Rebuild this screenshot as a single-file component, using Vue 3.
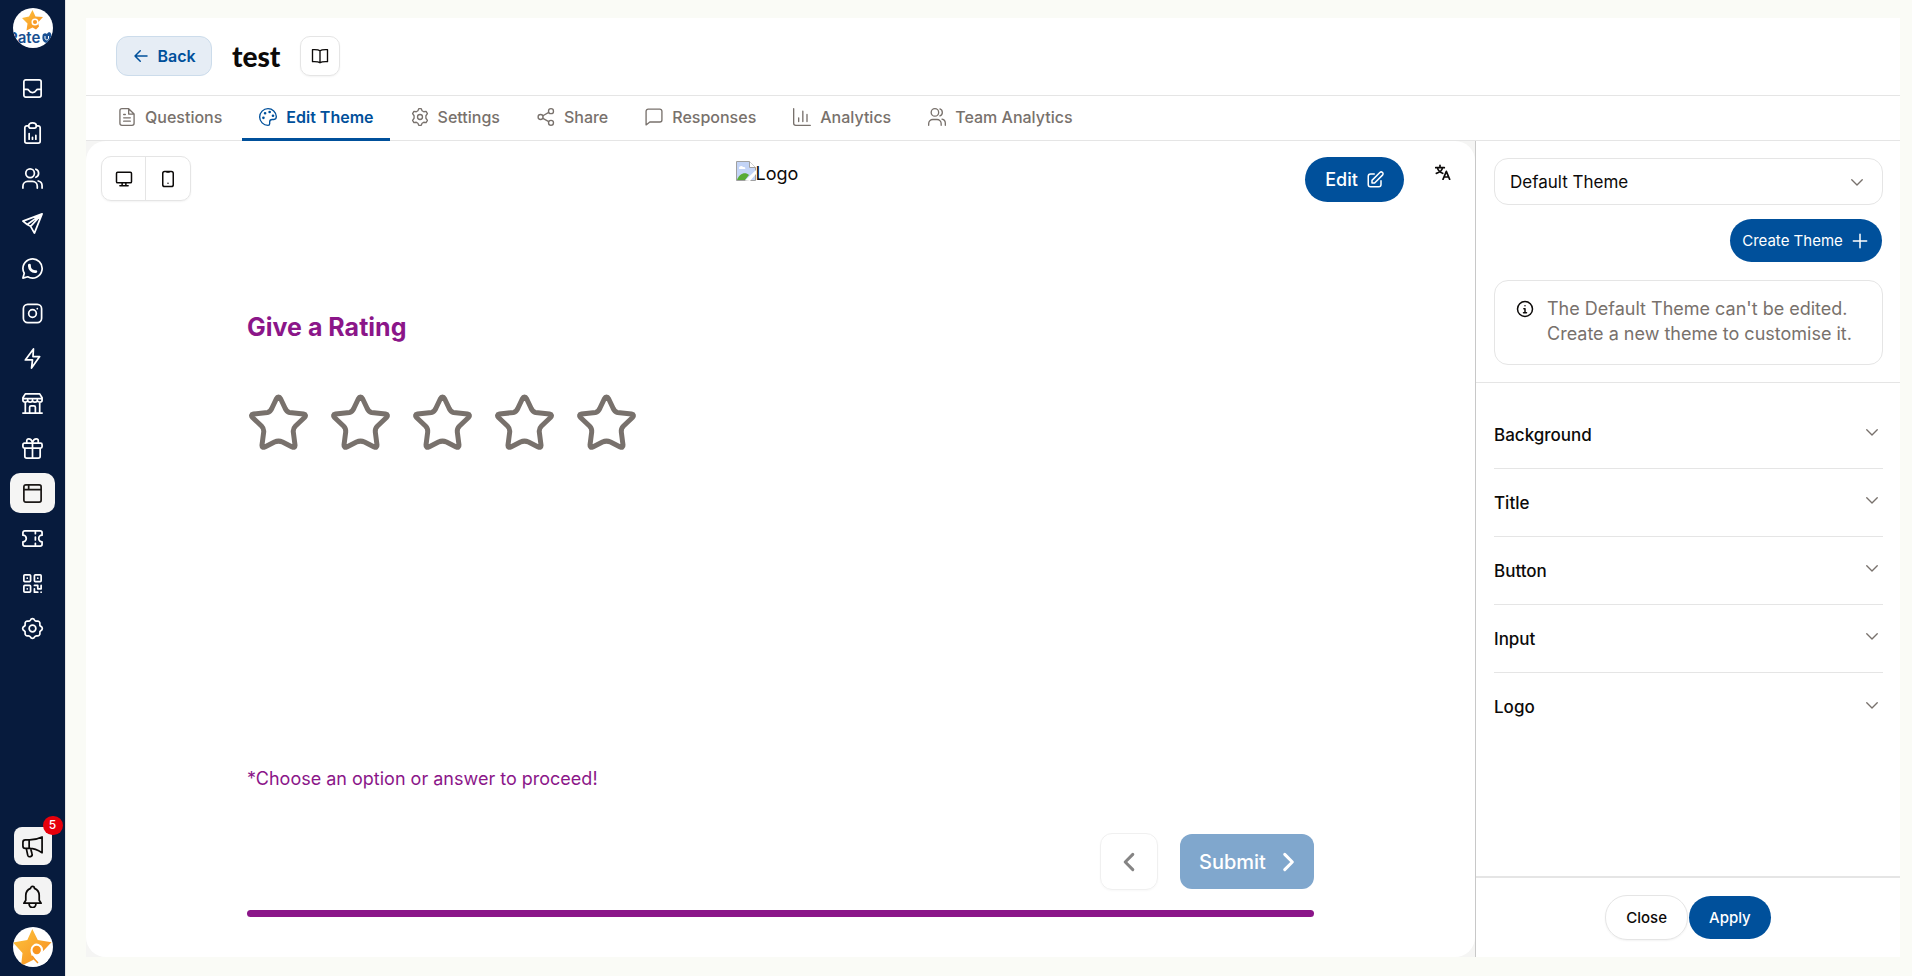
<script setup>
import { ref } from 'vue'

const icons = {
  inbox: '<rect x="3" y="3" width="18" height="18" rx="2"/><path d="M3 13h3.500c.8 0 1.300.4 1.700 1 .8 1.500 2 2.200 3.800 2.200s3-.7 3.800-2.200c.4-.6.9-1 1.700-1H21"/>',
  report: '<path d="M8 4H6a2 2 0 0 0-2 2v14a2 2 0 0 0 2 2h12a2 2 0 0 0 2-2V6a2 2 0 0 0-2-2h-2"/><path d="M8 4c0-1.500 1-3 4-3s4 1.500 4 3-1 2.500-2 2.500h-4C9 6.500 8 5.500 8 4zM8.500 12v6M12 16v2M15.500 14v4"/>',
  users: '<path d="M22 22v-2.500a5 5 0 0 0-4-4.900M15.500 2.300a4.500 4.500 0 0 1 0 8.400M17 22v-2a5 5 0 0 0-5-5H7a5 5 0 0 0-5 5v2"/><circle cx="9.500" cy="6.500" r="4.500"/>',
  send: '<path d="M22 2 2 9.500 6.500 13 22 2zM22 2 10 15l4 7 8-20zM6.500 13l3.500 2"/>',
  whatsapp: '<path d="M2 22l1.400-5A10 10 0 1 1 7 20.600L2 22z"/><path stroke-width="3" d="M8.800 8.500v1a6 6 0 0 0 5.700 5.700h1"/>',
  insta: '<rect x="2.500" y="2.500" width="19" height="19" rx="4.500"/><circle cx="12" cy="12" r="4"/><path d="M17 7h.01"/>',
  zap: '<path d="M13 2 4.500 13.500H12L11 22l8.500-12H12.500L13 2z"/>',
  shop: '<path d="M4.500 2h15L22 6v2.500c0 1.200-1 2-2.200 2S17 9.500 17 8.500c0 1-1 2-2.500 2S12 9.500 12 8.500c0 1-1 2-2.500 2S7 9.500 7 8.500c0 1-1.600 2-2.800 2S2 9.700 2 8.500V6l2.500-4zM2.500 7h19M4.500 11v11M19.500 11v11M2 22h20M9 22v-6c0-.8.500-1.500 1.500-1.500h3c1 0 1.500.7 1.500 1.500v6"/>',
  gift: '<path d="M12 6v16M12 6C11 2.500 9.500 2 8 2a2 2 0 0 0-2 2v2.500M12 6c1-3.500 2.500-4 4-4a2 2 0 0 1 2 2v2.500M4 12v8a2 2 0 0 0 2 2h12a2 2 0 0 0 2-2v-8"/><rect x="2" y="6.500" width="20" height="5" rx="1.500"/>',
  browser: '<rect x="3" y="3" width="18" height="18" rx="2"/><path d="M3 8h18M8 3v5"/>',
  ticket: '<path d="M4 4h16c1.200 0 2 .8 2 2v2.500a3.500 3.500 0 0 0 0 7V18c0 1.200-.8 2-2 2H4c-1.200 0-2-.8-2-2v-2.500a3.500 3.500 0 0 0 0-7V6c0-1.200.8-2 2-2zM15 4v3M15 10.500v3M15 17v3"/>',
  qr: '<rect x="3" y="3" width="7" height="7" rx="1"/><rect x="14" y="3" width="7" height="7" rx="1"/><rect x="3" y="14" width="7" height="7" rx="1"/><path d="M6.500 6.500h.01M17.500 6.500h.01M6.500 17.500h.01M14 14h3.500v3.500M21 14v3.500h-3.500M14 17.500V21h3.500M21 21h.01"/>',
  gear: '<circle cx="12" cy="12" r="3.500"/><path d="M9.800 3.200a2.400 2.400 0 0 1 4.400 0 2.400 2.400 0 0 0 2.700 1.100 2.400 2.400 0 0 1 2.800 2.800 2.400 2.400 0 0 0 1.100 2.700 2.400 2.400 0 0 1 0 4.400 2.400 2.400 0 0 0-1.100 2.700 2.400 2.400 0 0 1-2.800 2.800 2.400 2.400 0 0 0-2.700 1.100 2.400 2.400 0 0 1-4.400 0 2.400 2.400 0 0 0-2.700-1.100 2.400 2.400 0 0 1-2.800-2.800 2.400 2.400 0 0 0-1.100-2.700 2.400 2.400 0 0 1 0-4.400 2.400 2.400 0 0 0 1.100-2.700 2.400 2.400 0 0 1 2.800-2.800 2.400 2.400 0 0 0 2.700-1.100z"/>',
  megaphone: '<path d="M22 2v16.500c-4-2.500-8-4.500-13-4.500H4.500A2.500 2.500 0 0 1 2 11.500v-4C2 6 3 5 4.500 5H9c5 0 9-1 13-3zM8.500 5v9M5.500 14l1.500 7c.4 1.500 1.500 2 3 1.500s2-1.500 1.500-3L10 14"/>',
  bell: '<path d="M10 3.500a2 2 0 0 1 4 0c3 1.200 5 4 5 7.500v5l2 3H3l2-3v-5c0-3.500 2-6.300 5-7.500zM8.500 19v1a3.500 3.500 0 0 0 7 0v-1"/>',
  back: '<path d="M20 12H4m7-7-7 7 7 7"/>',
  book: '<path d="M12 5v15M12 5c-2-1.600-5-1.800-10-1.500v16c5-.3 8 0 10 1.500 2-1.500 5-1.800 10-1.500v-16c-5-.3-8-.1-10 1.500z"/>',
  file: '<path d="M14 2H6a2.500 2.500 0 0 0-2.500 2.500v15A2.500 2.500 0 0 0 6 22h12a2.500 2.500 0 0 0 2.500-2.500V8.500L14 2zM14 2v6.500h6.500M8 9h2M8 13h8M8 17h8"/>',
  palette: '<path d="M12 2a10 10 0 0 0 0 20c1.700 0 2-.8 2-2v-2c0-2 1.300-3 3-3h2c2 0 3-1.500 3-3.500A10 10 0 0 0 12 2z"/><circle cx="6.500" cy="13" r=".8"/><circle cx="8.500" cy="7.500" r=".8"/><circle cx="14" cy="6" r=".8"/><circle cx="18" cy="10.500" r=".8"/>',
  cog: '<circle cx="12" cy="12" r="3"/><path d="M9.500 4.500 10.500 2h3l1 2.500 2 1.200 2.800-.4 1.600 2.700-1.800 2.500v3l1.800 2.500-1.600 2.700-2.800-.4-2 1.200-1 2.500h-3l-1-2.500-2-1.200-2.800.4L3.100 16l1.800-2.500v-3L3.100 8l1.600-2.700 2.800.4 2-1.200z"/>',
  share: '<circle cx="18" cy="5" r="3"/><circle cx="5.500" cy="12" r="3"/><circle cx="18" cy="19" r="3"/><path d="m8.300 13.600 7 4M15.300 6.500l-7 4"/>',
  message: '<path d="M2.500 21.500V5A2.500 2.500 0 0 1 5 2.500h14A2.500 2.500 0 0 1 21.500 5v10.500A2.500 2.500 0 0 1 19 18H7l-4.500 3.500z"/>',
  chart: '<path d="M22 22H4.500A2.500 2.500 0 0 1 2 19.500V2M8 13v4.500M13 5v12.500M18 9v8.500"/>',
  desktop: '<rect x="2" y="3" width="20" height="14" rx="1.500"/><path d="M9.500 17v4M14.500 17v4M6.500 21h11"/>',
  phone: '<rect x="5" y="2" width="14" height="20" rx="2.500"/><path d="M10.500 2.800h3M12 17.500h.01"/>',
  edit: '<path d="M11 4H6a3 3 0 0 0-3 3v11a3 3 0 0 0 3 3h11a3 3 0 0 0 3-3v-5M8 12.500V16h3.500L22 5.500a2.400 2.400 0 0 0-3.500-3.500L8 12.500z"/>',
  translate: '<path d="M1 5.500h13M7.500 2v3.500M3.500 5.500c1 4 4 7 8 8.500M11.500 5.500c-1 4-4 7-9.500 8.500M12 23l5-12 5 12M13.500 19.500h7"/>',
  down: '<path d="m5 9 7 7 7-7"/>',
  plus: '<path d="M12 4v16M4 12h16"/>',
  info: '<circle cx="12" cy="12" r="10"/><path d="M10.500 11.500H12V17M10 17h4M12 7.500h.01"/>',
  left: '<path d="m15.500 5-7 7 7 7"/>',
  right: '<path d="m9 5 7 7-7 7"/>'
}

const menu = ['inbox', 'report', 'users', 'send', 'whatsapp', 'insta', 'zap', 'shop', 'gift', 'browser', 'ticket', 'qr', 'gear']
const tabs = [
  { icon: 'file', label: 'Questions' },
  { icon: 'palette', label: 'Edit Theme' },
  { icon: 'cog', label: 'Settings' },
  { icon: 'share', label: 'Share' },
  { icon: 'message', label: 'Responses' },
  { icon: 'chart', label: 'Analytics' },
  { icon: 'users', label: 'Team Analytics' }
]
const sections = ['Background', 'Title', 'Button', 'Input', 'Logo']
const current = ref('Edit Theme')
const theme = ref('Default Theme')
const rating = ref(0)
</script>

<template>
  <div class="page">
    <aside class="side">
      <svg class="round" viewBox="0 0 40 40" role="img" aria-label="RateU">
        <defs>
          <clipPath id="disc"><circle cx="20" cy="20" r="20" /></clipPath>
          <linearGradient id="gold" x1="0" y1="0" x2="1" y2="1">
            <stop offset="0" stop-color="#fdc63f" />
            <stop offset="1" stop-color="#f78a1d" />
          </linearGradient>
        </defs>
        <g clip-path="url(#disc)">
          <rect width="40" height="40" fill="#fff" />
          <path d="M19.500 2l3 6.500 7.500.5-5 5.500 1 4-3 3-3.500-2-6 3 1-7L9 10l7-1.500z" fill="url(#gold)" />
          <circle cx="22" cy="14" r="2.800" fill="#f99a26" stroke="#fff" stroke-width="1.500" />
          <text x="-5" y="35" class="brand">Rate</text>
          <path d="M29.500 28c0-3 3-3.500 4.500-2 1-2.500 4-2 4 0 2 3 0 9-4 9s-5-4-4.500-7z" fill="#184f91" />
          <path d="M32 28v2c0 2.500 3.500 2.500 3.500 0v-2" fill="none" stroke="#fff" />
        </g>
      </svg>
      <nav class="menu">
        <a v-for="m in menu" :key="m" href="#" :aria-label="m" :class="{ on: m === 'browser' }">
          <svg class="icon i23" viewBox="0 0 24 24" v-html="icons[m]"></svg>
        </a>
      </nav>
      <div class="bottom">
        <button class="square" aria-label="Announcements">
          <svg class="icon i23" viewBox="0 0 24 24" v-html="icons.megaphone"></svg>
          <span class="badge">5</span>
        </button>
        <button class="square" aria-label="Notifications">
          <svg class="icon i23" viewBox="0 0 24 24" v-html="icons.bell"></svg>
        </button>
        <svg class="round" viewBox="0 0 40 40" role="img" aria-label="Profile">
          <g clip-path="url(#disc)">
            <rect width="40" height="40" fill="#fff" />
            <path d="M19.300 2l5.500 11 13.700 2.300-9 9.500L20 33l-4 2-8 4 1.500-13L0 15.500 14.300 13z" fill="url(#gold)" />
            <path d="M17.500 23a6.300 6.300 0 1 1 11.500 3.500l6-3v14h-9c-5-4-8.500-9-8.500-14.500z" fill="#fff" />
            <circle cx="23.700" cy="23" r="4.200" fill="#f8951f" />
            <path d="M19 29c2 3 4 5 6 7" stroke="#f8951f" stroke-width="1.500" fill="none" />
          </g>
        </svg>
      </div>
    </aside>

    <main class="main">
      <header class="head">
        <button class="back">
          <svg class="icon i18" viewBox="0 0 24 24" v-html="icons.back"></svg>Back
        </button>
        <h1>test</h1>
        <button class="guide" aria-label="Guide">
          <svg class="icon i18" viewBox="0 0 24 24" v-html="icons.book"></svg>
        </button>
      </header>

      <nav class="tabs">
        <a v-for="t in tabs" :key="t.label" href="#" :class="{ on: current === t.label }" @click.prevent="current = t.label">
          <svg class="icon i20" viewBox="0 0 24 24" v-html="icons[t.icon]"></svg>{{ t.label }}
        </a>
      </nav>

      <div class="work">
        <section class="preview">
          <div class="tools">
            <div class="devices">
              <button aria-label="Desktop"><svg class="icon i18" viewBox="0 0 24 24" v-html="icons.desktop"></svg></button>
              <button aria-label="Mobile"><svg class="icon i18" viewBox="0 0 24 24" v-html="icons.phone"></svg></button>
            </div>
            <div class="logo">
              <svg width="20" height="20" viewBox="0 0 20 20">
                <path d="M.5.5h13l6 6v13H.500z" fill="#c3d4f7" stroke="#a0a0a0" />
                <path d="M13.500.5v6h6" fill="#fff" stroke="#a0a0a0" />
                <path d="M3 7c0-2 3-3 4-1 2-.5 3 1 2 2H4C3 8 3 7.500 3 7z" fill="#fff" />
                <path d="M1 19c2-6 8-9 12-5l-4 5z" fill="#57ab35" />
                <path d="M9 19.500 20 9v4l-6 7z" fill="#fff" />
              </svg>Logo
            </div>
            <div class="actions">
              <button class="edit">Edit<svg class="icon i18" viewBox="0 0 24 24" v-html="icons.edit"></svg></button>
              <button class="lang" aria-label="Language"><svg class="icon i16" viewBox="0 0 24 24" v-html="icons.translate"></svg></button>
            </div>
          </div>

          <div class="question">
            <h2>Give a Rating</h2>
            <div class="stars">
              <button v-for="n in 5" :key="n" :aria-label="n + ' star'" @click="rating = n">
                <svg viewBox="0 0 62 62">
                  <path d="M31.500 6c1 0 1.500.5 2 1.500l4.500 9.500c1 2.500 2 4 4.500 4.500l14 1.500c2.300.4 2.500 2 1 3.500l-9 8.500c-2 2-2.500 3.500-2.200 6l1.700 13c.2 2.300-1 2.800-2.800 2l-9.700-5c-3-1.300-5-1.300-8 0l-9.700 5c-1.800.8-3 .3-2.800-2l1.700-13c.3-2.500-.2-4-2.200-6l-9-8.500c-1.500-1.500-1.300-3.100 1-3.500l14-1.500c2.500-.5 3.500-2 4.500-4.500l4.500-9.500c.5-1 1-1.500 2-1.500z" />
                </svg>
              </button>
            </div>
            <p class="warn">*Choose an option or answer to proceed!</p>
            <div class="steps">
              <button class="prev" aria-label="Previous"><svg class="icon i26" viewBox="0 0 24 24" v-html="icons.left"></svg></button>
              <button class="submit">Submit<svg class="icon i26" viewBox="0 0 24 24" v-html="icons.right"></svg></button>
            </div>
            <div class="progress"></div>
          </div>
        </section>

        <aside class="panel">
          <div class="theme">
            <div class="pick">
              <select v-model="theme" aria-label="Theme">
                <option>Default Theme</option>
              </select>
              <svg class="icon i18" viewBox="0 0 24 24" v-html="icons.down"></svg>
            </div>
            <button class="create">Create Theme<svg class="icon i20" viewBox="0 0 24 24" v-html="icons.plus"></svg></button>
            <div class="note">
              <svg class="icon i18" viewBox="0 0 24 24" v-html="icons.info"></svg>
              <p>The Default Theme can't be edited. Create a new theme to customise it.</p>
            </div>
          </div>
          <div class="sections">
            <button v-for="s in sections" :key="s">
              {{ s }}<svg class="icon i18" viewBox="0 0 24 24" v-html="icons.down"></svg>
            </button>
          </div>
          <footer class="foot">
            <button class="close">Close</button>
            <button class="apply">Apply</button>
          </footer>
        </aside>
      </div>
    </main>
  </div>
</template>

<style>
body {
  background: #fafbf6;
}
</style>

<style scoped>
.page {
  display: flex;
  min-height: 100vh;
  font-family: Inter, "Liberation Sans", sans-serif;
  font-size: 16px;
  color: #0c0a09;
}
.page * {
  box-sizing: border-box;
}
button {
  font: inherit;
  color: inherit;
  background: none;
  border: 0;
  padding: 0;
  cursor: pointer;
  display: flex;
  align-items: center;
  justify-content: center;
}
a {
  text-decoration: none;
  color: inherit;
}
h1, h2, p {
  margin: 0;
}
.icon {
  fill: none;
  stroke: currentColor;
  stroke-width: 1.8;
  stroke-linecap: round;
  stroke-linejoin: round;
  flex: none;
}
.i16 { width: 16px; height: 16px; }
.i18 { width: 18px; height: 18px; }
.i20 { width: 20px; height: 20px; }
.i23 { width: 23px; height: 23px; }
.i26 { width: 26px; height: 26px; }

.side {
  width: 66px;
  flex: none;
  display: flex;
  flex-direction: column;
  align-items: center;
  padding: 8px 0 9px;
  background: #071b3d;
  border-right: 1px solid #e5e5e5;
}
.round {
  width: 40px;
  height: 40px;
}
.brand {
  font-size: 15px;
  font-weight: 600;
  fill: #184f91;
}
.menu {
  display: flex;
  flex-direction: column;
  gap: 5px;
  margin-top: 20px;
  color: #fff;
}
.menu a {
  display: flex;
  align-items: center;
  justify-content: center;
  width: 45px;
  height: 40px;
  border-radius: 10px;
}
.menu .on {
  background: #f5f5f4;
  color: #1c1917;
}
.bottom {
  display: flex;
  flex-direction: column;
  align-items: center;
  gap: 12px;
  margin-top: auto;
}
.square {
  position: relative;
  width: 38px;
  height: 38px;
  border-radius: 8px;
  background: #f3f3f3;
}
.badge {
  position: absolute;
  top: -11px;
  right: -11px;
  width: 20px;
  height: 19px;
  border-radius: 10px;
  background: #e7000b;
  color: #fff;
  font-size: 12px;
  line-height: 18px;
  font-weight: 500;
}

.main {
  flex: 1;
  min-width: 0;
  display: flex;
  flex-direction: column;
  margin: 18px 12px 19px 20px;
  background: #fff;
}
.head {
  display: flex;
  align-items: center;
  gap: 20px;
  padding: 18px 30px 19px;
  border-bottom: 1px solid #e5e5e5;
}
.back {
  gap: 7px;
  width: 96px;
  height: 40px;
  border: 1px solid #ccdceb;
  border-radius: 12px;
  background: #e6edf5;
  color: #00509b;
  font-weight: 600;
}
.back .icon {
  stroke-width: 2;
}
h1 {
  font-family: Lato, "Open Sans", sans-serif;
  font-size: 28px;
  line-height: 32px;
  font-weight: 900;
}
.guide {
  width: 40px;
  height: 40px;
  border: 1px solid #e5e5e5;
  border-radius: 10px;
  box-shadow: 0 1px 2px #0000000d;
}
.tabs {
  display: flex;
  gap: 4px;
  height: 45px;
  padding: 0 15px;
  border-bottom: 1px solid #e5e5e5;
  color: #78716c;
  font-weight: 500;
}
.tabs a {
  display: flex;
  align-items: center;
  gap: 8px;
  height: 45px;
  padding: 0 16px;
  border-bottom: 3px solid transparent;
}
.tabs .icon {
  stroke-width: 1.6;
}
.tabs .on {
  border-color: #00509b;
  color: #00509b;
  font-weight: 600;
}

.work {
  flex: 1;
  display: flex;
  background: #f5f5f4;
}
.preview {
  flex: 1;
  display: flex;
  flex-direction: column;
  padding: 15px 0 40px;
  border-radius: 20px;
  background: #fff;
}
.tools {
  display: grid;
  grid-template-columns: 1fr auto 1fr;
  align-items: start;
  padding: 0 24px 0 15px;
  font-size: 18px;
}
.devices {
  display: flex;
  justify-self: start;
  border: 1px solid #e5e5e5;
  border-radius: 10px;
  box-shadow: 0 1px 2px #0000000d;
}
.devices button {
  width: 43px;
  height: 43px;
}
.devices button + button {
  width: 45px;
  border-left: 1px solid #e5e5e5;
}
.devices .icon {
  stroke-width: 2;
}
.logo {
  display: flex;
  margin: 5px 18px 0 0;
  line-height: 26px;
}
.actions {
  display: flex;
  justify-self: end;
  align-items: start;
  gap: 31px;
}
.edit {
  gap: 8px;
  width: 99px;
  height: 45px;
  margin-top: 1px;
  border-radius: 23px;
  background: #00509b;
  color: #fff;
  font-weight: 500;
}
.edit .icon {
  stroke-width: 2;
}
.lang {
  margin-top: 8px;
}
.lang .icon {
  stroke-width: 2.500;
}
.question {
  flex: 1;
  display: flex;
  flex-direction: column;
  margin: 109px 161px 0;
  color: #8b1689;
}
h2 {
  font-size: 25px;
  line-height: 32px;
  font-weight: 700;
}
.stars {
  display: flex;
  gap: 20px;
  margin-top: 48px;
}
.stars svg {
  display: block;
  width: 62px;
  height: 62px;
  fill: none;
  stroke: #78716c;
  stroke-width: 5;
  stroke-linejoin: round;
}
.warn {
  margin-top: auto;
  font-size: 18px;
  line-height: 28px;
}
.steps {
  display: flex;
  align-items: center;
  justify-content: flex-end;
  gap: 22px;
  margin-top: 40px;
}
.prev {
  width: 58px;
  height: 57px;
  border: 1px solid #f0f0f0;
  border-radius: 12px;
  color: #858484;
  box-shadow: 0 1px 2px #00000008;
}
.submit {
  justify-content: space-between;
  width: 134px;
  height: 55px;
  padding: 0 13px 0 19px;
  border-radius: 12px;
  background: #80a7cd;
  color: #fff;
  font-size: 20px;
  font-weight: 500;
}
.steps .icon {
  stroke-width: 2.800;
}
.progress {
  height: 7px;
  margin-top: 20px;
  border-radius: 4px;
  background: #8b1689;
}

.panel {
  width: 425px;
  flex: none;
  display: flex;
  flex-direction: column;
  border-left: 1px solid #c8c8c8;
  background: #fff;
  font-size: 17px;
}
.theme {
  display: flex;
  flex-direction: column;
  padding: 17px 17px 17px 18px;
  border-bottom: 1px solid #e5e5e5;
}
.pick {
  display: grid;
  align-items: center;
}
.pick select, .pick svg {
  grid-area: 1 / 1;
}
.pick select {
  appearance: none;
  height: 47px;
  padding: 0 15px;
  border: 1px solid #e5e5e5;
  border-radius: 14px;
  background: #fff;
  color: inherit;
  font: inherit;
}
.pick svg {
  justify-self: end;
  margin-right: 17px;
  pointer-events: none;
}
.pick svg, .sections svg {
  color: #78716c;
}
.create {
  align-self: flex-end;
  gap: 7px;
  width: 152px;
  height: 43px;
  margin: 14px 1px 0 0;
  border-radius: 22px;
  background: #00509b;
  color: #fff;
  font-size: 15px;
}
.note {
  display: flex;
  gap: 13px;
  margin-top: 18px;
  padding: 15px 21px 18px;
  border: 1px solid #e5e5e5;
  border-radius: 14px;
  font-size: 18px;
  line-height: 25px;
}
.note .icon {
  margin-top: 4px;
  stroke-width: 2;
}
.note p {
  color: #78716c;
}
.sections {
  flex: 1;
  display: flex;
  flex-direction: column;
  padding: 18px 17px 18px 18px;
}
.sections button {
  justify-content: space-between;
  height: 68px;
  padding-right: 2px;
  border-bottom: 1px solid #e5e5e5;
  font-weight: 500;
}
.sections button:last-child {
  border-bottom: 0;
}
.sections svg {
  margin-bottom: 5px;
}
.foot {
  display: flex;
  align-items: center;
  justify-content: center;
  height: 81px;
  border-top: 2px solid #e5e5e5;
  font-size: 15px;
  font-weight: 500;
}
.foot button {
  height: 43px;
  padding: 0 20px;
  border-radius: 22px;
}
.foot .close {
  height: 45px;
  border: 1px solid #e5e5e5;
  box-shadow: 0 1px 2px #0000000d;
}
.foot .apply {
  margin-left: 1px;
  background: #00509b;
  color: #fff;
}
</style>
